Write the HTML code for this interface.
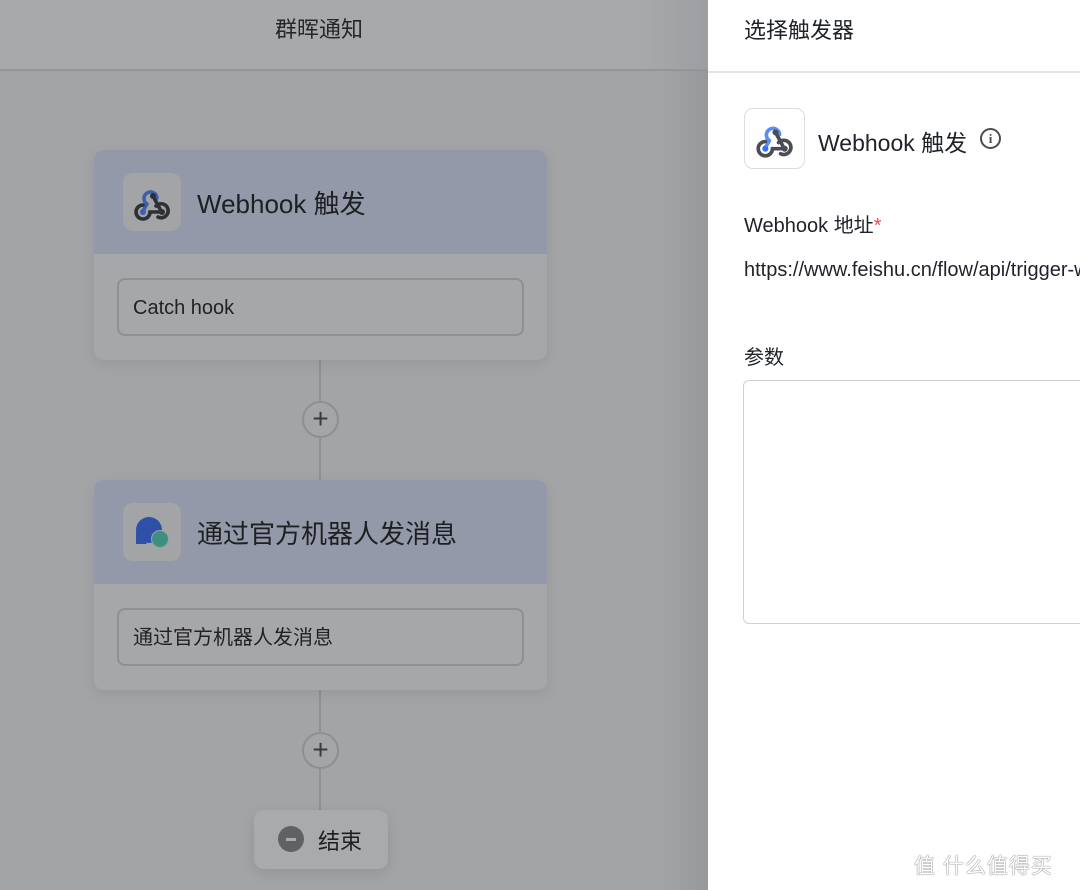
<!DOCTYPE html>
<html><head><meta charset="utf-8">
<style>
*{box-sizing:border-box;margin:0;padding:0}
html,body{overflow:hidden}
body{width:1080px;height:890px;position:relative;font-family:"Liberation Sans","Noto Sans CJK SC",sans-serif;color:#1f2329;background:#a0a1a3}
.left{position:absolute;left:0;top:0;width:708px;height:890px;background:linear-gradient(90deg,#a3a4a6 0,#a3a4a6 660px,#97989b 708px)}
.hdr{position:absolute;left:0;top:0;width:708px;height:71px;background:linear-gradient(90deg,#a8a9ab 0,#a8a9ab 640px,#9d9ea1 708px);border-bottom:2px solid #949598;font-size:22px;color:#262729}
.hdr span{position:absolute;left:275px;top:12px}
.vline{position:absolute;left:319px;width:2px;background:#909194}
.card{position:absolute;left:94px;width:453px;border-radius:10px;overflow:hidden;background:#a6a7a9;box-shadow:0 4px 14px rgba(0,0,0,.08)}
.card .top{height:104px;background:#9399a9;position:relative}
.card .ic{position:absolute;left:29px;top:23px;width:58px;height:58px;border-radius:10px;background:#a3a4a6}
.card .tt{position:absolute;left:103px;top:34px;font-size:26px;color:#1e1f22}
.card .inp{position:absolute;left:23px;top:128px;width:407px;height:58px;border:2px solid #8f9093;border-radius:8px;font-size:20px;line-height:56px;padding-left:14px;color:#222}
.plus{position:absolute;left:302px;width:37px;height:37px;border-radius:50%;border:2px solid #8e8f92;background:#a4a5a7;text-align:center;line-height:32px;font-size:28px;color:#3a3b3e;font-weight:300}
.end{position:absolute;left:254px;top:810px;width:134px;height:59px;border-radius:10px;background:#a9aaac;box-shadow:0 4px 14px rgba(0,0,0,.1)}
.end .dot{position:absolute;left:24px;top:16px;width:26px;height:26px;border-radius:50%;background:#5f6165}
.end .dot:after{content:"";position:absolute;left:8px;top:12px;width:10px;height:3px;background:#a9aaac}
.end span{position:absolute;left:64px;top:14px;font-size:22px;color:#1e1f22}
.right{position:absolute;left:708px;top:0;width:372px;height:890px;background:#fff;overflow:hidden}
.rh{height:73px;border-bottom:2px solid #e3e4e6;font-size:22px;line-height:62px;padding-left:36px;color:#1f2329}
.ric{position:absolute;left:36px;top:108px;width:61px;height:61px;border:1px solid #dcdde0;border-radius:9px}
.rt{position:absolute;left:110px;top:124px;font-size:23px}
.info{position:absolute;left:980px;top:128px;width:21px;height:21px;border:2px solid #4b4d52;border-radius:50%;font:bold 13px/17px "Liberation Serif",serif;text-align:center;color:#4b4d52}
.lab{position:absolute;left:36px;font-size:20px;color:#1f2329}
.ta{position:absolute;left:35px;top:380px;width:360px;height:244px;border:1px solid #cfd0d3;border-radius:6px}
.wm{position:absolute;left:914px;top:850px;font-size:21px;color:#fff;text-shadow:0 0 1px #666,0 0 1px #666;letter-spacing:1px}
</style></head><body>
<div class="left">
 <div class="hdr"><span>群晖通知</span></div>
 <div class="vline" style="top:360px;height:130px"></div>
 <div class="vline" style="top:690px;height:120px"></div>
 <div class="card" style="top:150px;height:210px">
  <div class="top"><div class="ic">
   <svg width="58" height="58" viewBox="0 0 58 58"><g fill="none" stroke-width="3.6" stroke-linecap="round"><path d="M24 31l-4 7M24 31a6.5 6.5 0 1 1 10-6" stroke="#3d5fb0"/><path d="M30 23l7 13" stroke="#2e3036"/><path d="M20 32a7 7 0 1 0 7 7h10" stroke="#2e3036"/><path d="M33 33a7 7 0 1 1 2 11" stroke="#2e3036"/></g><circle cx="30" cy="23" r="3" fill="#2e3036"/><circle cx="20" cy="39" r="3" fill="#3d5fb0"/><circle cx="39" cy="39" r="3" fill="#2e3036"/></svg>
  </div><div class="tt">Webhook 触发</div></div>
  <div class="inp">Catch hook</div>
 </div>
 <div class="plus" style="top:401px">+</div>
 <div class="card" style="top:480px;height:210px">
  <div class="top"><div class="ic">
   <svg width="58" height="58" viewBox="0 0 58 58"><circle cx="26" cy="27" r="13" fill="#2d50a8"/><path d="M13 29v12h11z" fill="#2d50a8"/><circle cx="37" cy="36" r="8.5" fill="#3f8f80" stroke="#9aa0ac" stroke-width="1"/></svg>
  </div><div class="tt">通过官方机器人发消息</div></div>
  <div class="inp">通过官方机器人发消息</div>
 </div>
 <div class="plus" style="top:732px">+</div>
 <div class="end"><div class="dot"></div><span>结束</span></div>
</div>
<div class="right">
 <div class="rh">选择触发器</div>
 <div class="ric"><svg width="59" height="59" viewBox="0 0 58 58"><g fill="none" stroke-width="3.6" stroke-linecap="round"><path d="M24 31l-4 7M24 31a6.5 6.5 0 1 1 10-6" stroke="#5b8def"/><path d="M30 23l7 13" stroke="#4a4d55"/><path d="M20 32a7 7 0 1 0 7 7h10" stroke="#4a4d55"/><path d="M33 33a7 7 0 1 1 2 11" stroke="#4a4d55"/></g><circle cx="30" cy="23" r="3" fill="#4a4d55"/><circle cx="20" cy="39" r="3" fill="#3370ff"/><circle cx="39" cy="39" r="3" fill="#4a4d55"/></svg></div>
 <div class="rt">Webhook 触发</div>
 <div class="lab" style="top:209px">Webhook 地址<span style="color:#f54a45">*</span></div>
 <div class="lab" style="top:259px;white-space:nowrap">https://www.feishu.cn/flow/api/trigger-webhook</div>
 <div class="lab" style="top:341px">参数</div>
 <div class="ta"></div>
</div>
<div class="info">i</div>
<div class="wm">值 什么值得买</div>
</body></html>
